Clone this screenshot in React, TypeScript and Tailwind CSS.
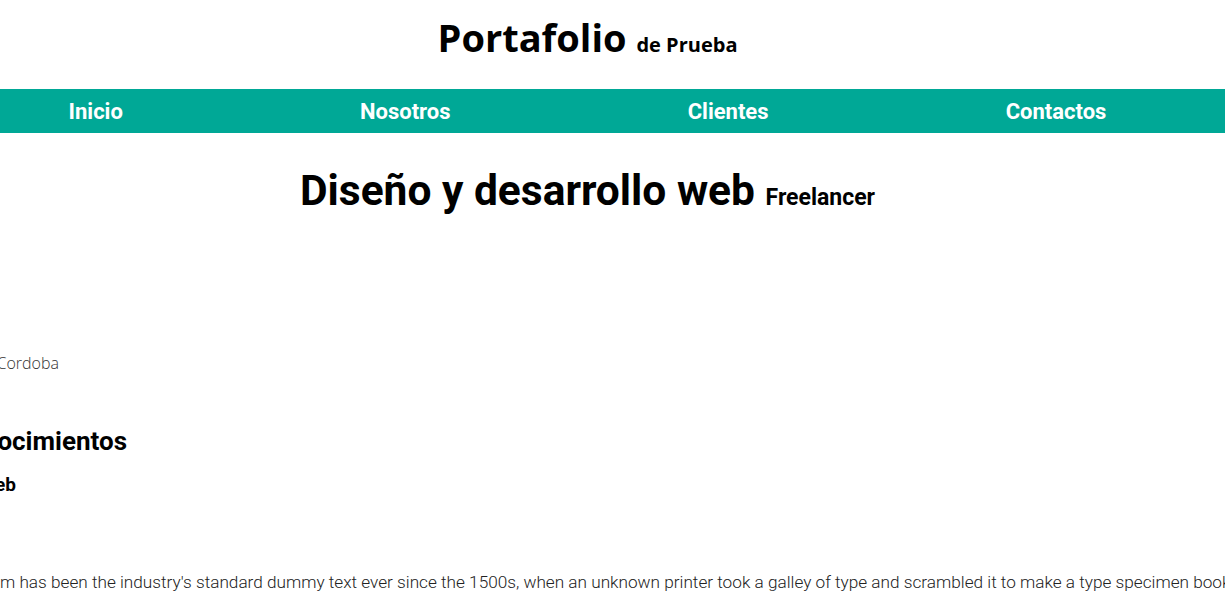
const navItems = ["Inicio", "Nosotros", "Clientes", "Contactos"];

const App = () => {
  return (
    <div className="w-full overflow-hidden bg-white text-black">
      <div className="w-[1275px] -ml-[50px]">
        {/* Header */}
        <header className="h-[89px] flex justify-center pt-[18px]">
          <h1 className="font-['Open_Sans',sans-serif] font-bold text-[38px] leading-none whitespace-nowrap">
            Portafolio <small className="text-[20px]">de Prueba</small>
          </h1>
        </header>

        {/* Nav */}
        <nav className="h-[44px] bg-[#00a896]">
          <ul className="h-full flex items-center justify-around font-['Roboto',sans-serif] font-bold text-[22px] text-white">
            {navItems.map((item) => (
              <li key={item}>
                <a href="#">{item}</a>
              </li>
            ))}
          </ul>
        </nav>

        {/* Hero */}
        <section className="mt-[37px] flex justify-center">
          <h2 className="font-['Roboto',sans-serif] font-bold text-[42.5px] leading-none whitespace-nowrap">
            Diseño y desarrollo web <small className="text-[23px]">Freelancer</small>
          </h2>
        </section>

        {/* Info */}
        <section className="pl-[50px] mt-[142px]">
          <div className="w-[59px] flex justify-end whitespace-nowrap">
            <p className="font-['Open_Sans',sans-serif] font-light text-[16px] leading-none text-[#333]">
              Cordoba
            </p>
          </div>

          <div className="mt-[57px] w-[127px] flex justify-end whitespace-nowrap">
            <h3 className="font-['Roboto',sans-serif] font-bold text-[26px] leading-none">
              Conocimientos
            </h3>
          </div>

          <div className="mt-[21px] w-[16px] flex justify-end whitespace-nowrap">
            <h4 className="font-['Roboto',sans-serif] font-bold text-[19px] leading-none">
              Web
            </h4>
          </div>

          <div className="mt-[80px] flex whitespace-nowrap font-['Roboto',sans-serif] font-light text-[17.2px] leading-none text-[#222]">
            <span className="w-0 flex justify-end">
              <span>Lorem Ipsum is simply dummy text of the printing and typesetting industry. Lorem Ipsu</span>
            </span>
            <span>
              m has been the industry's standard dummy text ever since the 1500s, when an unknown printer took a galley of type and scrambled it to make a type specimen book. It has survived not only five centuries
            </span>
          </div>
        </section>
      </div>
    </div>
  );
};

export default App;
